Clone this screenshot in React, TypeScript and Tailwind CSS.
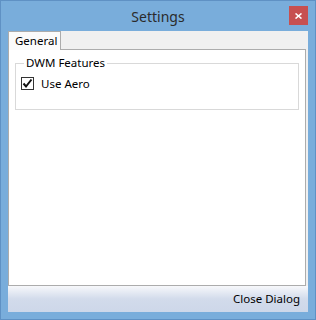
import React from 'react';

const font = { fontFamily: '"Noto Sans", "Open Sans", sans-serif' };

const CheckMark = () => (
  <svg width="11" height="11" viewBox="0 0 11 11">
    <path d="M1.5 5.5 L4 8.5 L9.5 1.5" fill="none" stroke="#111" strokeWidth="2" />
  </svg>
);

const App = () => {
  return (
    <div
      className="w-[316px] h-[320px] bg-[#79addb] border border-[#5f91c4] flex flex-col text-[11.5px] text-black"
      style={font}
    >
      {/* title bar */}
      <div className="relative h-[30px] flex items-center justify-center">
        <span className="text-[14px] text-[#2b2b2b]">Settings</span>
        <button className="absolute right-[7px] top-[5px] w-[19px] h-[19px] bg-[#c75050] flex items-center justify-center">
          <svg width="7" height="6" viewBox="0 0 7 6">
            <path d="M0.5 0.5 L6.5 5.5 M6.5 0.5 L0.5 5.5" stroke="#fff" strokeWidth="1.6" />
          </svg>
        </button>
      </div>

      {/* client area */}
      <div className="flex-1 mx-[7px] mb-[7px] bg-[#f0f0f0] flex flex-col">
        <div className="h-[18px] flex">
          <div className="w-[53px] h-[19px] bg-[#fbfbfb] border border-b-0 border-[#acacac] relative z-10 flex items-center pl-[6px] whitespace-nowrap">
            General
          </div>
        </div>

        <div className="mr-[2px] h-[237px] bg-white border border-[#acacac]">
          <fieldset className="mx-[6px] mt-[6px] h-[54px] border border-[#d9d9d9] px-[5px]">
            <legend className="ml-[3px] px-[2px] leading-[14px]">DWM Features</legend>
            <label className="flex items-center gap-[7px] mt-[5px]">
              <span className="w-[13px] h-[13px] border border-[#333] bg-white flex items-center justify-center">
                <CheckMark />
              </span>
              <span>Use Aero</span>
            </label>
          </fieldset>
        </div>

        <div className="flex-1 bg-gradient-to-b from-[#f7f8fb] via-[#d2dbeb] to-[#cdd7e9] flex items-center justify-end pr-[8px]">
          Close Dialog
        </div>
      </div>
    </div>
  );
};

export default App;
